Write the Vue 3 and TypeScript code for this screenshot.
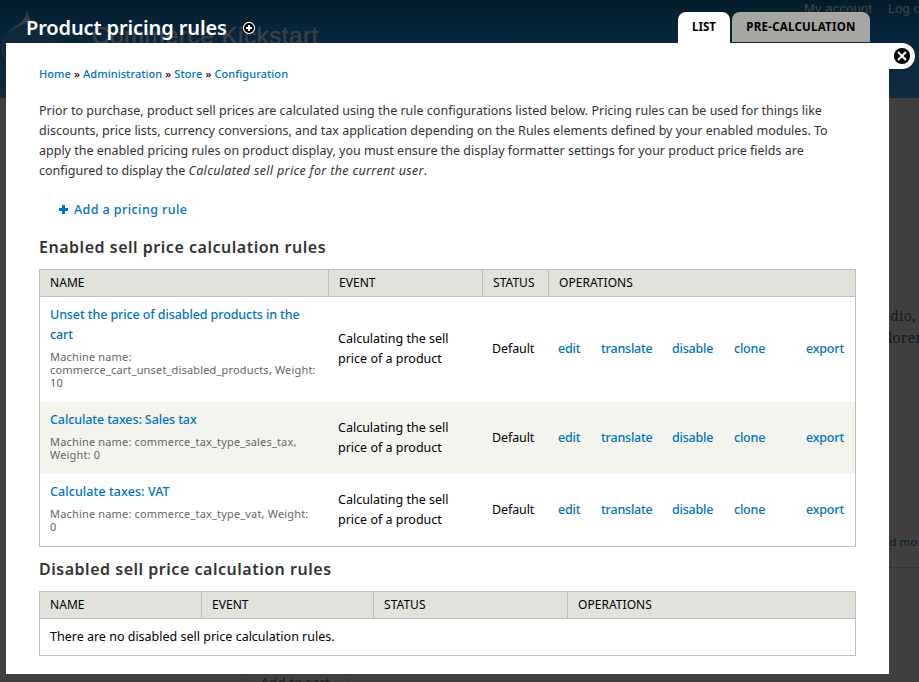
<script setup lang="ts">
interface Rule {
  id: string
  title: string[]
  machine: string[]
}

const crumbs: string[] = ['Home', 'Administration', 'Store', 'Configuration']

const intro: string[] = [
  'Prior to purchase, product sell prices are calculated using the rule configurations listed below. Pricing rules can be used for things like',
  'discounts, price lists, currency conversions, and tax application depending on the Rules elements defined by your enabled modules. To',
  'apply the enabled pricing rules on product display, you must ensure the display formatter settings for your product price fields are',
]

const columns: string[] = ['Name', 'Event', 'Status', 'Operations']
const operations: string[] = ['edit', 'translate', 'disable', 'clone', 'export']

const rules: Rule[] = [
  {
    id: 'unset',
    title: ['Unset the price of disabled products in the', 'cart'],
    machine: ['Machine name:', 'commerce_cart_unset_disabled_products, Weight:', '10'],
  },
  {
    id: 'sales',
    title: ['Calculate taxes: Sales tax'],
    machine: ['Machine name: commerce_tax_type_sales_tax,', 'Weight: 0'],
  },
  {
    id: 'vat',
    title: ['Calculate taxes: VAT'],
    machine: ['Machine name: commerce_tax_type_vat, Weight:', '0'],
  },
]
</script>

<template>
  <div class="page">
    <div class="backdrop" aria-hidden="true">
      <div class="site-header">
        <svg class="site-logo" width="60" height="68" viewBox="0 0 60 68">
          <defs>
            <linearGradient id="drop" x1="0.7" y1="0" x2="0.2" y2="1">
              <stop offset="0" stop-color="#2b3a42" />
              <stop offset="0.5" stop-color="#3a4144" />
              <stop offset="1" stop-color="#1c313e" />
            </linearGradient>
          </defs>
          <path d="M27 2C28 12 35 14 43 20C52 27 57 34 57 43C54 57 43 65 29 65C14 65 3 56 2 43C1 31 9 23 17 18C23 14 26 9 27 2Z" fill="#10293a" />
          <path d="M27 2C28 7 29 10 32 13C24 15 11 21 6 28C9 22 14 19 19 16C24 12 26 8 27 2Z" fill="url(#drop)" />
          <path d="M5 28C3 33 2 40 4 47C5 50 6 52 7 54C3 49 1 43 2 37C2 34 3 31 5 28Z" fill="#2a3a43" />
        </svg>
        <span class="site-name">Commerce Kickstart</span>
        <span class="site-link account">My account</span>
        <span class="site-link logout">Log out</span>
      </div>
      <span class="ghost-copy copy-a">odio,</span>
      <span class="ghost-copy copy-b">lorem</span>
      <span class="ghost-more">Read more</span>
      <span class="ghost-rule"></span>
      <span class="ghost-button">Add to cart</span>
    </div>

    <div class="overlay">
      <header class="titlebar">
        <h1>Product pricing rules</h1>
        <svg class="shortcut" width="14" height="14" viewBox="0 0 14 14">
          <circle cx="7" cy="7" r="5.6" fill="#000" stroke="#fff" stroke-width="1.1" />
          <path d="M7 4v6M4 7h6" stroke="#fff" stroke-width="2" />
        </svg>
        <nav class="tabs">
          <a class="tab active"><span>LIST</span></a>
          <a class="tab"><span>PRE-CALCULATION</span></a>
        </nav>
      </header>

      <div class="body">
        <main class="panel">
          <nav class="breadcrumb">
            <template v-for="(c, i) in crumbs" :key="c">
              <span v-if="i > 0" class="sep">»</span>
              <a>{{ c }}</a>
            </template>
          </nav>

          <p class="intro">
            <span v-for="(line, i) in intro" :key="i" class="line">{{ line }}</span>
            <span class="line">configured to display the <em>Calculated sell price for the current user</em>.</span>
          </p>

          <a class="add">
            <svg width="9" height="9" viewBox="0 0 9 9"><path d="M4.5 0v9M0 4.5h9" stroke="#0074bd" stroke-width="3" /></svg>
            <span>Add a pricing rule</span>
          </a>

          <h2 class="h-enabled">Enabled sell price calculation rules</h2>
          <section class="table enabled">
            <div class="row head">
              <div v-for="c in columns" :key="c" class="th">{{ c }}</div>
            </div>
            <div v-for="r in rules" :key="r.id" :class="['row', 'rule', r.id]">
              <div class="name-cell">
                <a v-for="t in r.title" :key="t" class="rule-title">{{ t }}</a>
                <div class="machine">
                  <div v-for="m in r.machine" :key="m">{{ m }}</div>
                </div>
              </div>
              <div class="event-cell"><div>Calculating the sell</div><div>price of a product</div></div>
              <div class="status-cell">Default</div>
              <div class="ops">
                <a v-for="o in operations" :key="o">{{ o }}</a>
              </div>
            </div>
          </section>

          <h2 class="h-disabled">Disabled sell price calculation rules</h2>
          <section class="table disabled">
            <div class="row head">
              <div v-for="c in columns" :key="c" class="th">{{ c }}</div>
            </div>
            <div class="empty">There are no disabled sell price calculation rules.</div>
          </section>
        </main>
        <a class="close" aria-label="Close">
          <svg width="18" height="18" viewBox="0 0 18 18">
            <circle cx="9" cy="9" r="8.1" fill="#000" />
            <path d="M5 5l8 8M13 5l-8 8" stroke="#fff" stroke-width="2.1" />
          </svg>
        </a>
      </div>
    </div>
  </div>
</template>

<style>
body {
  margin: 0;
  background: #404040;
}
</style>

<style scoped>
.page {
  position: relative;
  width: 919px;
  height: 682px;
  overflow: hidden;
  background: #404040;
  font-family: "Noto Sans", "Open Sans", sans-serif;
  font-size: 12.5px;
  line-height: 20px;
  color: #000;
  white-space: nowrap;
}
.backdrop {
  position: absolute;
  inset: 0;
}
.site-header {
  height: 98px;
  background: linear-gradient(#031c29, #07253a 30%, #0e2a3e 80%, #122a3d);
}
.site-logo {
  position: absolute;
  left: 0;
  top: 8px;
}
.site-name {
  position: absolute;
  left: 92px;
  top: 21px;
  font: 24px/30px "Liberation Sans", Arial, sans-serif;
  letter-spacing: 0.6px;
  color: #3b4043;
  -webkit-text-stroke: 0.5px #3b4043;
}
.site-link {
  position: absolute;
  top: 1px;
  font: 13px/16px "Liberation Sans", Arial, sans-serif;
  color: #40474c;
}
.account { left: 804px; letter-spacing: 0.15px; }
.logout { left: 888px; }
.ghost-copy {
  position: absolute;
  font: 14px/22px "Noto Serif", "Liberation Serif", serif;
  color: #191919;
}
.copy-a { left: 882px; top: 305px; letter-spacing: 0.2px; }
.copy-b { left: 888px; top: 327px; letter-spacing: 0.2px; }
.ghost-more {
  position: absolute;
  left: 870px;
  top: 532px;
  font-size: 11px;
  letter-spacing: 0.2px;
  color: #001d2f;
}
.ghost-rule {
  position: absolute;
  left: 889px;
  right: 0;
  top: 567px;
  height: 1px;
  background: #353535;
}
.ghost-button {
  position: absolute;
  left: 242px;
  top: 672px;
  width: 105px;
  height: 24px;
  border: 1px solid #383838;
  border-radius: 12px;
  text-align: center;
  font-size: 13px;
  letter-spacing: 0.2px;
  line-height: 19px;
  color: #1d1d1d;
}
.overlay {
  position: relative;
  display: flex;
  flex-direction: column;
}
.titlebar {
  display: flex;
  height: 43px;
  padding-left: 26px;
}
h1 {
  margin: 13px 0 0;
  width: 216px;
  font-size: 20px;
  font-weight: 600;
  line-height: 30px;
  letter-spacing: -0.12px;
  color: #fff;
}
.shortcut {
  margin-top: 21px;
}
.tabs {
  display: flex;
  gap: 2px;
  margin-left: auto;
  padding: 12px 49px 0 0;
}
.tab {
  box-sizing: border-box;
  width: 138px;
  height: 30px;
  padding-top: 5px;
  border-radius: 8px 8px 0 0;
  background: #a6a7a2;
  text-align: center;
  font-size: 11.5px;
  font-weight: 700;
  letter-spacing: 0.25px;
}
.tab.active {
  width: 52px;
  height: 31px;
  background: #fff;
  letter-spacing: 0;
}
.body {
  display: flex;
  align-items: flex-start;
  padding-left: 6px;
}
.panel {
  box-sizing: border-box;
  width: 883px;
  height: 631px;
  padding: 21px 33px 0;
  background: #fff;
}
.close {
  display: flex;
  align-items: center;
  width: 26px;
  height: 26px;
  border-radius: 0 13px 13px 0;
  background: #fff;
}
.close svg {
  margin-left: 4px;
}
a {
  color: #0074bd;
}
.tab {
  color: #000;
}
.breadcrumb {
  display: flex;
  gap: 3px;
  font-size: 11px;
  font-weight: 500;
  letter-spacing: 0.07px;
}
.breadcrumb .sep {
  color: #300;
}
.intro {
  margin: 17px 0 0;
  color: #333;
  font-size: 12.5px;
}
.intro em {
  letter-spacing: 0.34px;
}
.line {
  display: block;
}
.add {
  display: flex;
  align-items: center;
  gap: 6px;
  margin: 19px 0 0 20px;
  font-weight: 500;
  letter-spacing: 0.42px;
}
.add svg {
  margin-bottom: 1px;
}
h2 {
  margin: 0;
  font-size: 16px;
  font-weight: 600;
  line-height: 24px;
  letter-spacing: 0.52px;
  color: #333;
}
.h-enabled {
  margin-top: 15px;
}
.h-disabled {
  margin-top: 10px;
}
.table {
  box-sizing: border-box;
  width: 817px;
  border: 1px solid #bebfb9;
}
.enabled {
  margin-top: 10px;
}
.disabled {
  margin-top: 10px;
}
.row {
  display: grid;
}
.enabled .row {
  grid-template-columns: 289px 154px 66px 1fr;
}
.disabled .row {
  grid-template-columns: 162px 172px 194px 1fr;
}
.head {
  height: 26px;
  border-bottom: 1px solid #bebfb9;
  background: #e1e2dc;
}
.th {
  padding: 3px 0 0 10px;
  border-right: 1px solid #bebfb9;
  text-transform: uppercase;
  font-size: 12px;
  letter-spacing: 0.05px;
}
.th:last-child {
  border-right: 0;
}
.rule {
  align-items: center;
}
.rule.unset {
  height: 105px;
}
.rule:nth-child(odd) {
  background: #f3f4ee;
}
.name-cell {
  padding: 8px 0 13px 10px;
}
.rule-title {
  display: block;
  font-weight: 500;
  letter-spacing: -0.1px;
}
.vat .rule-title {
  letter-spacing: 0.08px;
}
.machine {
  margin-top: 5px;
  font-size: 11px;
  line-height: 13px;
  letter-spacing: 0.17px;
  color: #666;
}
.unset .event-cell,
.unset .status-cell,
.unset .ops {
  padding-bottom: 2px;
}
.event-cell,
.status-cell {
  padding-left: 9px;
}
.status-cell {
  letter-spacing: -0.1px;
}
.ops {
  display: grid;
  grid-template-columns: 43px 71px 62px 72px auto;
  padding-left: 9px;
  font-weight: 500;
  letter-spacing: -0.2px;
}
.empty {
  height: 28px;
  padding: 8px 0 0 10px;
}
</style>
